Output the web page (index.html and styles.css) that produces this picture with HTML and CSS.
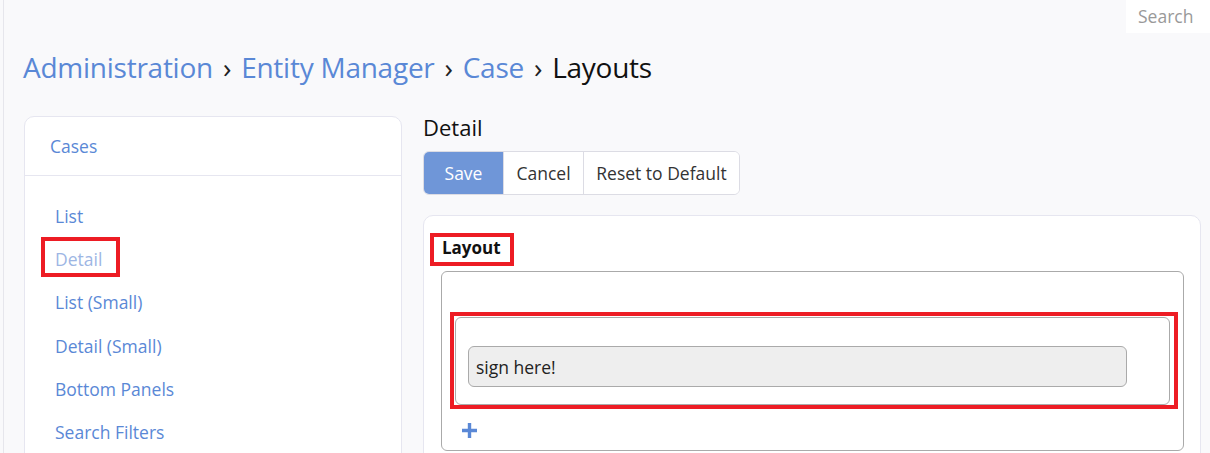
FILE: index.html
```html
<!DOCTYPE html>
<html>
<head>
<meta charset="utf-8">
<link rel="stylesheet" href="styles.css">
</head>
<body>
<div class="page">
  <div class="topbar">
    <div class="search">Search</div>
  </div>
  <div class="content">
    <h3 class="breadcrumb">
      <a>Administration</a><span class="sep">›</span><a>Entity Manager</a><span class="sep">›</span><a>Case</a><span class="sep">›</span><span class="cur">Layouts</span>
    </h3>
    <div class="row">
      <div class="side">
        <div class="side-head">Cases</div>
        <ul class="side-list">
          <li><a>List</a></li>
          <li><a class="active"><span class="mark mark-detail">Detail</span></a></li>
          <li><a>List (Small)</a></li>
          <li><a>Detail (Small)</a></li>
          <li><a>Bottom Panels</a></li>
          <li><a>Search Filters</a></li>
        </ul>
      </div>
      <div class="main">
        <h4 class="main-title">Detail</h4>
        <div class="btn-group">
          <button class="btn primary">Save</button>
          <button class="btn">Cancel</button>
          <button class="btn">Reset to Default</button>
        </div>
        <div class="panel">
          <div class="panel-title"><span class="mark mark-layout">Layout</span></div>
          <div class="layout-box">
            <div class="layout-row mark mark-row">
              <div class="field">sign here!</div>
            </div>
            <div class="add">
              <svg width="17" height="17" viewBox="0 0 17 17"><path d="M8.5 1v15M1 8.5h15" stroke="#5a88d6" stroke-width="3.4" fill="none"/></svg>
            </div>
          </div>
        </div>
      </div>
    </div>
  </div>
</div>
</body>
</html>
```
FILE: styles.css
```css
html, body {
  margin: 0;
  padding: 0;
  background: #f9f9fb;
  font-family: "Open Sans", "Liberation Sans", sans-serif;
  color: #222;
  overflow: hidden;
}
.page {
  margin-left: 3px;
  border-left: 1px solid #e6e6ec;
  min-height: 453px;
}
.topbar {
  display: flex;
  justify-content: flex-end;
  height: 33px;
}
.search {
  width: 72px;
  background: #fff;
  color: #999;
  font-size: 17.5px;
  line-height: 33px;
  padding-left: 12px;
}
.content {
  padding: 0 9px 0 19px;
}
.breadcrumb {
  margin: 14px 0 0 0;
  font-size: 28px;
  font-weight: 400;
  line-height: 40px;
  color: #111;
  letter-spacing: -0.25px;
}
.breadcrumb a {
  color: #5a88d6;
}
.breadcrumb .sep {
  margin: 0 10px;
  color: #222;
}
.row {
  display: flex;
  gap: 21px;
  margin-top: 29px;
  align-items: flex-start;
}
.side {
  margin-left: 1px;
  width: 376px;
  background: #fff;
  border: 1px solid #e6e6f0;
  border-radius: 10px;
  height: 360px;
  flex-shrink: 0;
}
.side-head {
  height: 58px;
  border-bottom: 1px solid #e6e6f0;
  padding-left: 25px;
  line-height: 58px;
  font-size: 17.5px;
  color: #5a88d6;
}
.side-list {
  list-style: none;
  margin: 0;
  padding: 18px 0 0 30px;
}
.side-list li {
  height: 43.2px;
  line-height: 44px;
  font-size: 17.5px;
}
.side-list a {
  color: #5a88d6;
}
.side-list a.active {
  color: #9db6e4;
}
.mark {
  position: relative;
}
.mark::after {
  content: "";
  position: absolute;
  border: 4px solid #ed1c24;
  pointer-events: none;
}
.mark-detail {
  display: inline-block;
  line-height: 22px;
}
.mark-detail::after {
  left: -14px;
  right: -18px;
  top: -11px;
  bottom: -7px;
}
.main {
  flex: 1;
}
.main-title {
  margin: 0;
  font-size: 22px;
  font-weight: 400;
  line-height: 22px;
  color: #111;
}
.btn-group {
  display: inline-flex;
  margin-top: 13px;
  border: 1px solid #dcdce4;
  border-radius: 6px;
  overflow: hidden;
  background: #fff;
}
.btn {
  font-family: inherit;
  font-size: 17.5px;
  height: 42px;
  border: 0;
  border-left: 1px solid #dcdce4;
  background: #fff;
  color: #333;
  padding: 0 4px;
  margin: 0;
}
.btn.primary {
  border-left: 0;
  background: #6f96d8;
  color: #fff;
  width: 79px;
}
.btn:nth-child(2) { width: 80px; }
.btn:nth-child(3) { width: 156px; }
.panel {
  margin-top: 20px;
  background: #fff;
  border: 1px solid #e6e6f0;
  border-radius: 10px;
  padding: 16px 16px 0 17px;
  height: 260px;
}
.panel-title {
  font-weight: 700;
  font-size: 17px;
  line-height: 22px;
  padding-left: 1px;
  margin-top: 5px;
  color: #111;
}
.mark-layout {
  display: inline-block;
  line-height: 22px;
}
.mark-layout::after {
  left: -12px;
  right: -13px;
  top: -4px;
  bottom: -7px;
}
.layout-box {
  margin-top: 12px;
  border: 1px solid #aaa;
  border-radius: 6px;
  padding: 45px 13px 0 13px;
  height: 133px;
}
.layout-row {
  display: block;
  border: 1px solid #aaa;
  border-radius: 6px;
  height: 58px;
  padding: 28px 42px 0 12px;
}
.mark-row::after {
  left: -6px;
  right: -9px;
  top: -6px;
  bottom: -5px;
}
.field {
  height: 39px;
  background: #eee;
  border: 1px solid #aaa;
  border-radius: 6px;
  line-height: 40px;
  padding-left: 7px;
  font-size: 17.5px;
  color: #222;
}
.add {
  margin-top: 17px;
  padding-left: 6px;
  height: 17px;
}
.add svg { display: block; }
```
